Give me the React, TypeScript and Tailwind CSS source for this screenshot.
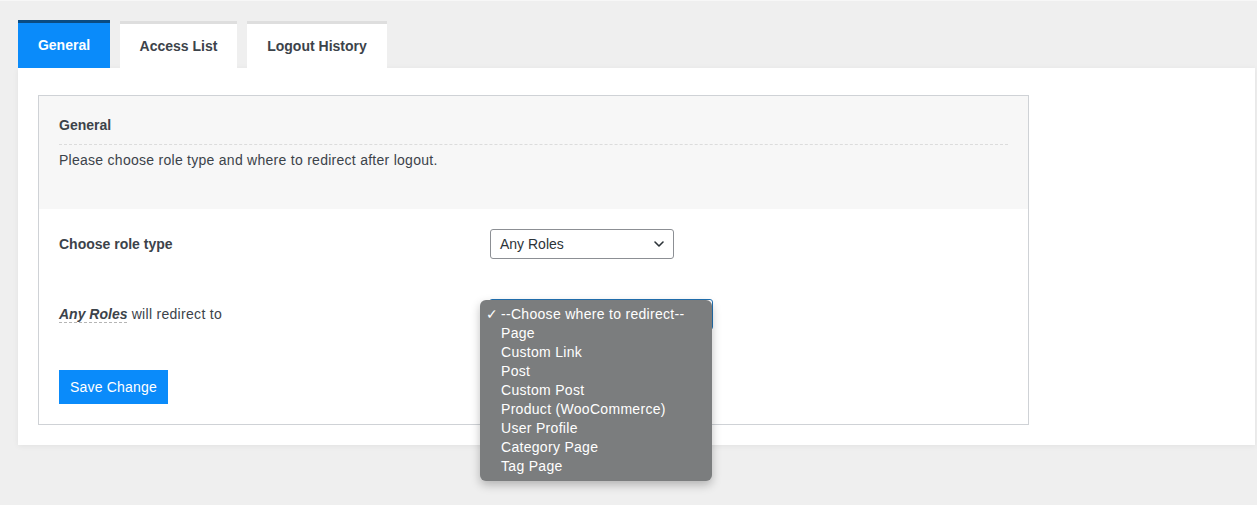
import React from "react";

const font = { fontFamily: '"Liberation Sans", Arial, sans-serif' };

export default function App() {
  const items = [
    "Page",
    "Custom Link",
    "Post",
    "Custom Post",
    "Product (WooCommerce)",
    "User Profile",
    "Category Page",
    "Tag Page",
  ];
  return (
    <div
      className="relative h-[505px] w-[1257px] bg-[#efefef] pt-[20px] pl-[18px] pr-[2px] text-[#3c434a]"
      style={font}
    >
      <div className="absolute left-0 top-0 h-px w-full bg-[#f7f7f7]" />
      {/* Tabs */}
      <div className="flex items-end gap-[10px]">
        <div className="flex h-[48px] w-[92px] items-center justify-center border-t-[3px] border-[#0a4b82] bg-[#0a8bfa] text-[14px] font-bold text-white">
          General
        </div>
        <div className="flex h-[47px] w-[117px] items-center justify-center border-t-[3px] border-[#dedede] bg-white text-[14px] font-bold text-[#3c434a]">
          Access List
        </div>
        <div className="flex h-[47px] w-[140px] items-center justify-center border-t-[3px] border-[#dedede] bg-white text-[14px] font-bold text-[#3c434a]">
          Logout History
        </div>
      </div>
      {/* Panel */}
      <div className="h-[377px] w-[1237px] bg-white pl-[20px] pt-[27px] shadow-[0_1px_6px_rgba(0,0,0,0.06)]">
        <div className="h-[330px] w-[991px] border border-[#cfd2d6]">
          <div className="h-[113px] bg-[#f7f7f7] px-[20px] pt-[20px]">
            <div className="text-[14px] font-bold leading-[18px] text-[#3c434a]">General</div>
            <div className="mt-[10px] border-t border-dashed border-[#dcdcdc]" />
            <div className="mt-[6px] text-[14px] leading-[18px] tracking-[0.27px] text-[#3c434a]">
              Please choose role type and where to redirect after logout.
            </div>
          </div>
          <div className="px-[20px]">
            <div className="mt-[20px] flex h-[30px] items-center">
              <div className="w-[431px] text-[14px] font-bold text-[#3c434a]">Choose role type</div>
              <div className="flex h-[30px] w-[184px] items-center justify-between rounded-[3px] border border-[#8c8f94] pl-[9px] pr-[7px] text-[14px] text-[#2c3338]">
                <span>Any Roles</span>
                <svg width="14" height="14" viewBox="0 0 14 14" fill="none">
                  <path d="M3 5l4 4 4-4" stroke="#2c3338" strokeWidth="1.6" strokeLinecap="round" strokeLinejoin="round" />
                </svg>
              </div>
            </div>
            <div className="mt-[40px] flex h-[30px] items-center">
              <div className="w-[430px] text-[14px] text-[#3c434a]">
                <span className="border-b border-dashed border-[#b5b5b5] font-bold italic">Any Roles</span>
                <span className="tracking-[0.3px]"> will redirect to</span>
              </div>
              <div className="relative h-[31px] w-[224px] rounded-[3px] border border-[#2271b1]">
                <div className="absolute left-[-10px] top-0 z-10 w-[232px] rounded-[6px] bg-[#7b7d7e] pb-[5px] pt-[5px] text-[14px] leading-[19px] tracking-[0.3px] text-white shadow-[0_4px_10px_rgba(0,0,0,0.25)]">
                  <div className="relative pl-[21px]">
                    <span className="absolute left-[6px]">✓</span>
                    --Choose where to redirect--
                  </div>
                  {items.map((it) => (
                    <div key={it} className="pl-[21px]">
                      {it}
                    </div>
                  ))}
                </div>
              </div>
            </div>
            <div className="mt-[41px]">
              <div className="flex h-[34px] w-[109px] items-center justify-center bg-[#0a8bfa] text-[14px] tracking-[0.2px] text-white">
                Save Change
              </div>
            </div>
          </div>
        </div>
      </div>
    </div>
  );
}
